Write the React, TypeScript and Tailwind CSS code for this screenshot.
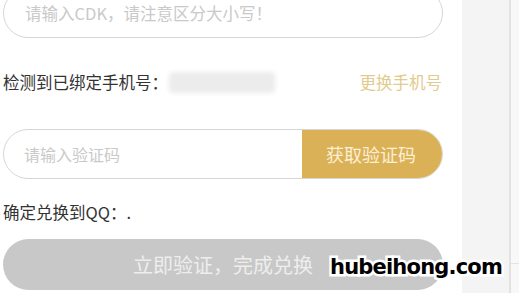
export default function App() {
    const font = { fontFamily: '"Noto Sans CJK SC", "Noto Sans", sans-serif' };
    return (
        <div className="relative flex w-[519px] h-[293px] overflow-hidden bg-white" style={font}>
            {/* main form column */}
            <main className="w-[462px] shrink-0 bg-white pl-[3px] pr-[19px] flex flex-col">
                <div className="-mt-3 h-[50px] w-[440px] rounded-full border border-[#d6d6d6] flex items-center pl-[21px] text-[16.5px] text-[#c9c9c9]">
                    请输入CDK，请注意区分大小写！
                </div>

                <div className="mt-[32px] h-[24px] flex items-center text-[16.5px] text-[#333333]">
                    <span>检测到已绑定手机号：</span>
                    <span className="ml-[1px] h-[21px] w-[106px] rounded-sm bg-[#ececec] blur-[2px]"></span>
                    <span className="ml-auto mr-[1px] text-[#e2cb8e]">更换手机号</span>
                </div>

                <div className="mt-[35px] h-[50px] w-[440px] rounded-full border border-[#d6d6d6] flex overflow-hidden">
                    <div className="flex-1 flex items-center pl-[20px] text-[16px] text-[#c9c9c9]">请输入验证码</div>
                    <button className="w-[140px] h-full bg-[#dbb157] text-[#fbefd4] text-[18px] pr-[2px]">获取验证码</button>
                </div>

                <div className="mt-[21px] h-[24px] flex items-center text-[16.5px] text-[#333333]">确定兑换到QQ：.</div>

                <button className="mt-[15px] h-[51px] w-[440px] shrink-0 rounded-full bg-[#c8c8c8] text-[20px] text-[#eeeeee]">
                    立即验证，完成兑换
                </button>
            </main>

            {/* side strip */}
            <div className="w-[47px] shrink-0 bg-[#f4f4f4]"></div>
            <div className="w-[2px] shrink-0 bg-[#e2e2e2]"></div>
            <div className="flex-1 flex flex-col bg-[#f8f8f8]">
                <div className="h-[263px]"></div>
                <div className="h-px bg-[#e4e4e4]"></div>
            </div>

            {/* watermark */}
            <div
                className="absolute left-[330px] top-[252px] text-[21px] leading-[30px] font-black text-black tracking-[-0.8px]"
                style={{ fontFamily: '"DejaVu Sans", sans-serif', WebkitTextStroke: '5px #fff', paintOrder: 'stroke fill' }}
            >
                hubeihong.com
            </div>
        </div>
    );
}
